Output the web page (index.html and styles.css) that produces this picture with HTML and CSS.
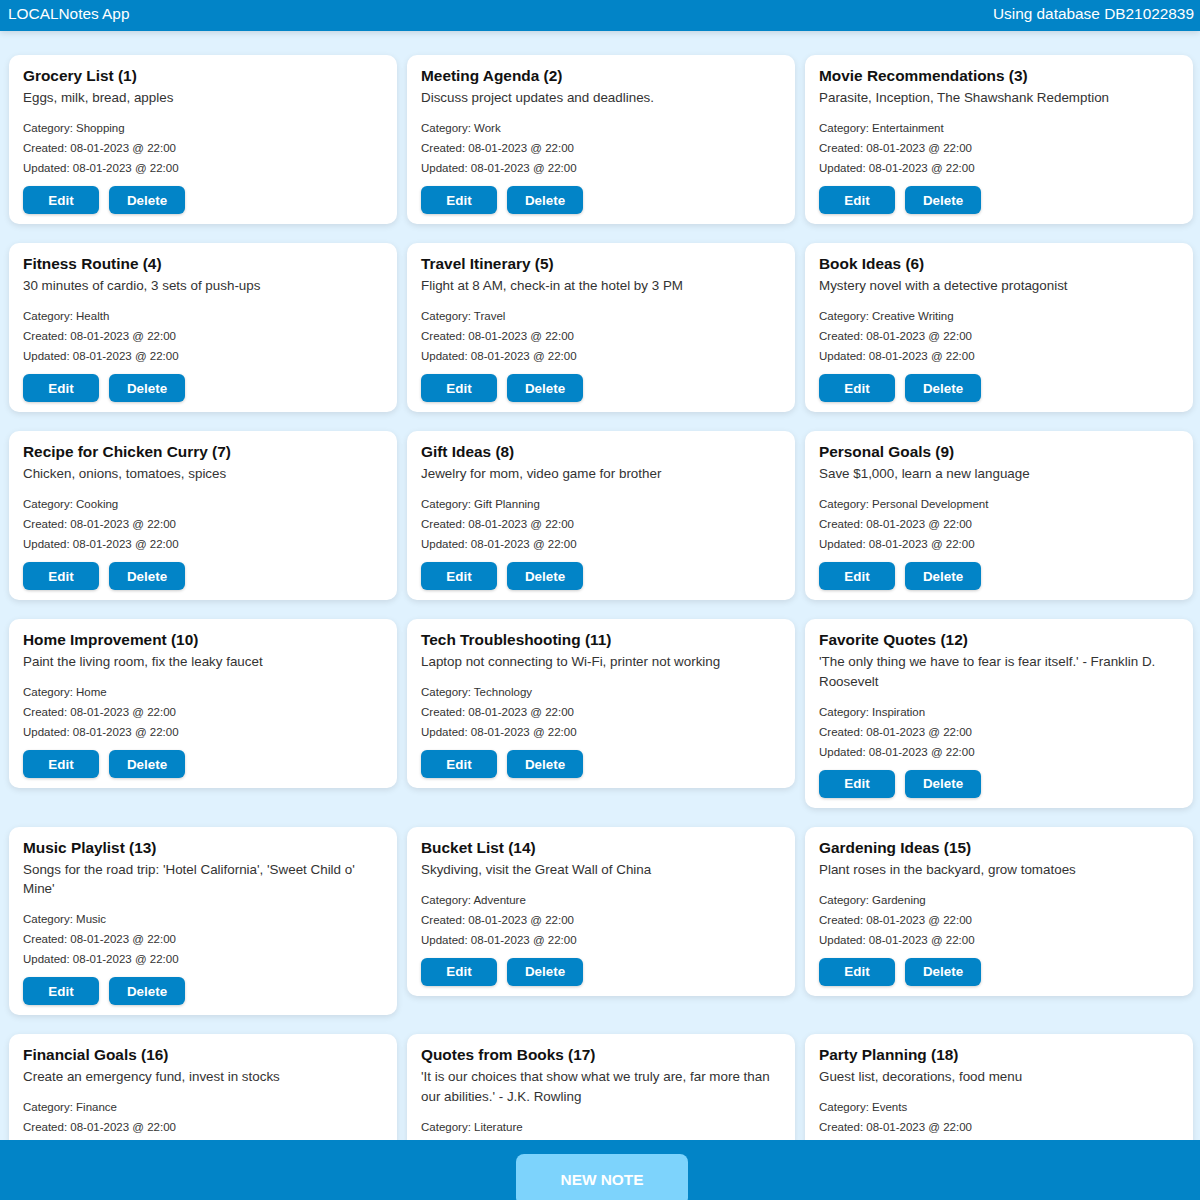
FILE: index.html
```html
<!DOCTYPE html>
<html lang="en">
<head>
<meta charset="utf-8">
<title>LOCALNotes App</title>
<link rel="stylesheet" href="styles.css">
</head>
<body>
<header class="topbar">
  <span class="brand">LOCALNotes App</span>
  <span class="db">Using database DB21022839</span>
</header>
<main class="notes">
  <article class="card"><h3 class="title">Grocery List (1)</h3><p class="desc">Eggs, milk, bread, apples</p><div class="meta"><div>Category: Shopping</div><div>Created: 08-01-2023 @ 22:00</div><div>Updated: 08-01-2023 @ 22:00</div></div><div class="actions"><button class="btn">Edit</button><button class="btn">Delete</button></div></article>
  <article class="card"><h3 class="title">Meeting Agenda (2)</h3><p class="desc">Discuss project updates and deadlines.</p><div class="meta"><div>Category: Work</div><div>Created: 08-01-2023 @ 22:00</div><div>Updated: 08-01-2023 @ 22:00</div></div><div class="actions"><button class="btn">Edit</button><button class="btn">Delete</button></div></article>
  <article class="card"><h3 class="title">Movie Recommendations (3)</h3><p class="desc">Parasite, Inception, The Shawshank Redemption</p><div class="meta"><div>Category: Entertainment</div><div>Created: 08-01-2023 @ 22:00</div><div>Updated: 08-01-2023 @ 22:00</div></div><div class="actions"><button class="btn">Edit</button><button class="btn">Delete</button></div></article>
  <article class="card"><h3 class="title">Fitness Routine (4)</h3><p class="desc">30 minutes of cardio, 3 sets of push-ups</p><div class="meta"><div>Category: Health</div><div>Created: 08-01-2023 @ 22:00</div><div>Updated: 08-01-2023 @ 22:00</div></div><div class="actions"><button class="btn">Edit</button><button class="btn">Delete</button></div></article>
  <article class="card"><h3 class="title">Travel Itinerary (5)</h3><p class="desc">Flight at 8 AM, check-in at the hotel by 3 PM</p><div class="meta"><div>Category: Travel</div><div>Created: 08-01-2023 @ 22:00</div><div>Updated: 08-01-2023 @ 22:00</div></div><div class="actions"><button class="btn">Edit</button><button class="btn">Delete</button></div></article>
  <article class="card"><h3 class="title">Book Ideas (6)</h3><p class="desc">Mystery novel with a detective protagonist</p><div class="meta"><div>Category: Creative Writing</div><div>Created: 08-01-2023 @ 22:00</div><div>Updated: 08-01-2023 @ 22:00</div></div><div class="actions"><button class="btn">Edit</button><button class="btn">Delete</button></div></article>
  <article class="card"><h3 class="title">Recipe for Chicken Curry (7)</h3><p class="desc">Chicken, onions, tomatoes, spices</p><div class="meta"><div>Category: Cooking</div><div>Created: 08-01-2023 @ 22:00</div><div>Updated: 08-01-2023 @ 22:00</div></div><div class="actions"><button class="btn">Edit</button><button class="btn">Delete</button></div></article>
  <article class="card"><h3 class="title">Gift Ideas (8)</h3><p class="desc">Jewelry for mom, video game for brother</p><div class="meta"><div>Category: Gift Planning</div><div>Created: 08-01-2023 @ 22:00</div><div>Updated: 08-01-2023 @ 22:00</div></div><div class="actions"><button class="btn">Edit</button><button class="btn">Delete</button></div></article>
  <article class="card"><h3 class="title">Personal Goals (9)</h3><p class="desc">Save $1,000, learn a new language</p><div class="meta"><div>Category: Personal Development</div><div>Created: 08-01-2023 @ 22:00</div><div>Updated: 08-01-2023 @ 22:00</div></div><div class="actions"><button class="btn">Edit</button><button class="btn">Delete</button></div></article>
  <article class="card"><h3 class="title">Home Improvement (10)</h3><p class="desc">Paint the living room, fix the leaky faucet</p><div class="meta"><div>Category: Home</div><div>Created: 08-01-2023 @ 22:00</div><div>Updated: 08-01-2023 @ 22:00</div></div><div class="actions"><button class="btn">Edit</button><button class="btn">Delete</button></div></article>
  <article class="card"><h3 class="title">Tech Troubleshooting (11)</h3><p class="desc">Laptop not connecting to Wi-Fi, printer not working</p><div class="meta"><div>Category: Technology</div><div>Created: 08-01-2023 @ 22:00</div><div>Updated: 08-01-2023 @ 22:00</div></div><div class="actions"><button class="btn">Edit</button><button class="btn">Delete</button></div></article>
  <article class="card"><h3 class="title">Favorite Quotes (12)</h3><p class="desc">'The only thing we have to fear is fear itself.' - Franklin D. Roosevelt</p><div class="meta"><div>Category: Inspiration</div><div>Created: 08-01-2023 @ 22:00</div><div>Updated: 08-01-2023 @ 22:00</div></div><div class="actions"><button class="btn">Edit</button><button class="btn">Delete</button></div></article>
  <article class="card"><h3 class="title">Music Playlist (13)</h3><p class="desc">Songs for the road trip: 'Hotel California', 'Sweet Child o' Mine'</p><div class="meta"><div>Category: Music</div><div>Created: 08-01-2023 @ 22:00</div><div>Updated: 08-01-2023 @ 22:00</div></div><div class="actions"><button class="btn">Edit</button><button class="btn">Delete</button></div></article>
  <article class="card"><h3 class="title">Bucket List (14)</h3><p class="desc">Skydiving, visit the Great Wall of China</p><div class="meta"><div>Category: Adventure</div><div>Created: 08-01-2023 @ 22:00</div><div>Updated: 08-01-2023 @ 22:00</div></div><div class="actions"><button class="btn">Edit</button><button class="btn">Delete</button></div></article>
  <article class="card"><h3 class="title">Gardening Ideas (15)</h3><p class="desc">Plant roses in the backyard, grow tomatoes</p><div class="meta"><div>Category: Gardening</div><div>Created: 08-01-2023 @ 22:00</div><div>Updated: 08-01-2023 @ 22:00</div></div><div class="actions"><button class="btn">Edit</button><button class="btn">Delete</button></div></article>
  <article class="card"><h3 class="title">Financial Goals (16)</h3><p class="desc">Create an emergency fund, invest in stocks</p><div class="meta"><div>Category: Finance</div><div>Created: 08-01-2023 @ 22:00</div><div>Updated: 08-01-2023 @ 22:00</div></div><div class="actions"><button class="btn">Edit</button><button class="btn">Delete</button></div></article>
  <article class="card"><h3 class="title">Quotes from Books (17)</h3><p class="desc">'It is our choices that show what we truly are, far more than our abilities.' - J.K. Rowling</p><div class="meta"><div>Category: Literature</div><div>Created: 08-01-2023 @ 22:00</div><div>Updated: 08-01-2023 @ 22:00</div></div><div class="actions"><button class="btn">Edit</button><button class="btn">Delete</button></div></article>
  <article class="card"><h3 class="title">Party Planning (18)</h3><p class="desc">Guest list, decorations, food menu</p><div class="meta"><div>Category: Events</div><div>Created: 08-01-2023 @ 22:00</div><div>Updated: 08-01-2023 @ 22:00</div></div><div class="actions"><button class="btn">Edit</button><button class="btn">Delete</button></div></article>
</main>
<footer class="bottombar">
  <button class="new-note">NEW NOTE</button>
</footer>
</body>
</html>
```
FILE: styles.css
```css
* { box-sizing: border-box; }
html, body { margin: 0; padding: 0; }
body {
  background: #e0f2fe;
  font-family: "Liberation Sans", Arial, sans-serif;
  color: #111;
}
.topbar {
  height: 31px;
  background: #0284c7;
  color: #fff;
  display: flex;
  justify-content: space-between;
  align-items: flex-start;
  padding: 0 6px 0 8px;
  font-size: 15.4px;
  line-height: 28px;
  box-shadow: 0 2px 6px rgba(0, 0, 0, 0.12);
  position: relative;
  z-index: 1;
}
.notes {
  display: grid;
  grid-template-columns: repeat(3, 1fr);
  column-gap: 10px;
  row-gap: 19px;
  align-items: start;
  padding: 24px 7px 90px 9px;
}
.card {
  background: #fff;
  border-radius: 10px;
  padding: 12px 14px 10px;
  box-shadow: 0 2px 6px rgba(0, 0, 0, 0.1);
}
.title {
  margin: 0;
  font-size: 15.4px;
  line-height: 18px;
  font-weight: bold;
  color: #111;
}
.desc {
  margin: 3px 0 0;
  font-size: 13.4px;
  line-height: 19.5px;
  color: #333;
}
.meta {
  margin-top: 10.5px;
  font-size: 11.5px;
  line-height: 20px;
  color: #333;
}
.actions {
  display: flex;
  gap: 10px;
  margin-top: 8px;
}
.btn {
  width: 76px;
  height: 28px;
  border: none;
  border-radius: 6px;
  background: #0284c7;
  color: #fff;
  font-family: "Liberation Sans", Arial, sans-serif;
  font-weight: bold;
  font-size: 13.4px;
  padding: 0;
  box-shadow: 0 1px 3px rgba(0, 0, 0, 0.2);
}
.bottombar {
  position: fixed;
  left: 0;
  right: 0;
  bottom: 0;
  height: 60px;
  background: #0284c7;
  display: flex;
  justify-content: center;
  padding: 14px 0 0 4px;
  z-index: 2;
}
.new-note {
  width: 172px;
  height: 52px;
  border: none;
  border-radius: 8px;
  background: #7dd3fc;
  color: #fff;
  font-family: "Liberation Sans", Arial, sans-serif;
  font-weight: bold;
  font-size: 15.4px;
  line-height: 18px;
  padding: 17px 0;
  align-self: flex-start;
  display: block;
  text-align: center;
}
```
